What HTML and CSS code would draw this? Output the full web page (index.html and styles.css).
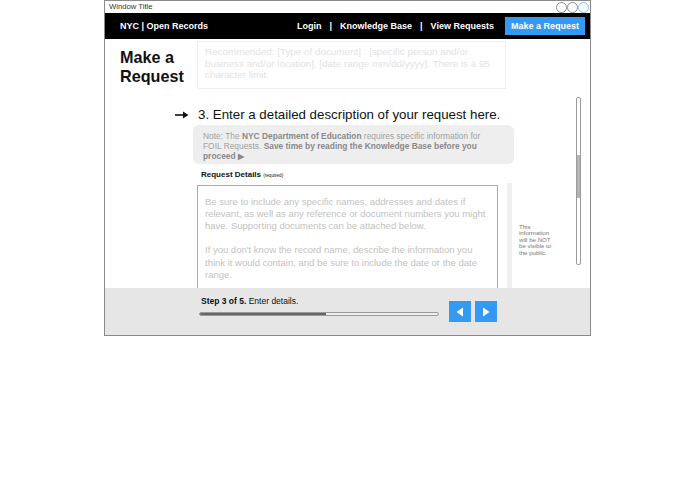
FILE: index.html
```html
<!DOCTYPE html>
<html>
<head>
<meta charset="utf-8">
<link rel="stylesheet" href="styles.css">
</head>
<body>
<div class="window">
  <div class="titlebar">
    <span class="title">Window Title</span>
    <span class="controls"><i class="dot"></i><i class="dot"></i><i class="dot active"></i></span>
  </div>
  <nav class="nav">
    <span class="brand">NYC | Open Records</span>
    <span class="links">
      <a>Login</a><span class="sep">|</span><a>Knowledge Base</a><span class="sep">|</span><a>View Requests</a>
      <a class="cta">Make a Request</a>
    </span>
  </nav>
  <main class="content">
    <div class="intro">
      <h1 class="page-title">Make a Request</h1>
      <div class="summary-box">Recommended: [Type of document] : [specific person and/or business and/or location], [date range mm/dd/yyyy]. There is a 95 character limit.</div>
    </div>
    <h2 class="step-heading">
      <svg class="arrow" width="14" height="8" viewBox="0 0 14 8"><path d="M0 4H10" stroke="#111" stroke-width="1.6"/><path d="M8 0.5L13.5 4L8 7.5Z" fill="#111"/></svg>
      <span>3. Enter a detailed description of your request here.</span>
    </h2>
    <div class="note">Note: The <b>NYC Department of Education</b> requires specific information for FOIL Requests. <b>Save time by reading the Knowledge Base before you proceed &#9654;</b></div>
    <div class="field-label">Request Details <small>(required)</small></div>
    <div class="details">
      <div class="textarea">
        <p>Be sure to include any specific names, addresses and dates if relevant, as well as any reference or document numbers you might have. Supporting documents can be attached below.</p>
        <p>If you don't know the record name, describe the information you think it would contain, and be sure to include the date or the date range.</p>
      </div>
      <div class="strip"></div>
      <div class="side-note">This information will be NOT be visible to the public.</div>
    </div>
    <div class="scrollbar"><div class="thumb"></div></div>
  </main>
  <footer class="footer">
    <div class="progress-wrap">
      <div class="step-text"><b>Step 3 of 5.</b> Enter details.</div>
      <div class="progress"><div class="fill" style="width:53%"></div></div>
    </div>
    <div class="pager">
      <button class="pbtn"><svg width="8" height="10" viewBox="0 0 8 10"><path d="M7 0.5V9.5L0.5 5Z" fill="#fff"/></svg></button>
      <button class="pbtn"><svg width="8" height="10" viewBox="0 0 8 10"><path d="M1 0.5V9.5L7.5 5Z" fill="#fff"/></svg></button>
    </div>
  </footer>
</div>
</body>
</html>
```
FILE: styles.css
```css
* { box-sizing: border-box; }
html, body { margin: 0; padding: 0; background: #fff; }
body { font-family: "Liberation Sans", Arial, Helvetica, sans-serif; color: #111; }

.window {
  margin-left: 104px;
  width: 487px;
  height: 336px;
  border: 1px solid #8a8a8a;
  display: flex;
  flex-direction: column;
  overflow: hidden;
}

.titlebar {
  height: 12px;
  display: flex;
  align-items: center;
  justify-content: space-between;
  padding: 0 1px 0 4px;
}
.title { font-size: 7.7px; color: #333; line-height: 12px; }
.controls { display: flex; height: 11px; margin-top: 1px; }
.dot {
  display: block;
  width: 11px; height: 11px;
  border: 1px solid #8a8a8a;
  border-radius: 50%;
  background: #fff;
}
.dot.active { border-color: #8cc3ea; }

.nav {
  height: 26px;
  background: #000;
  display: flex;
  align-items: center;
  justify-content: space-between;
  padding: 0 5px 0 15px;
  font-size: 9px;
  font-weight: bold;
  color: #fff;
}
.links { display: flex; align-items: center; }
.sep { margin: 0 8px; }
.cta {
  margin-left: 11px;
  background: #3399f3;
  height: 18px;
  line-height: 18px;
  padding: 0 6px;
}

.content {
  position: relative;
  height: 249px;
  overflow: hidden;
}
.intro { display: flex; height: 50px; }
.page-title {
  margin: 8.5px 0 0 15px;
  width: 77px;
  font-size: 16.2px;
  line-height: 19px;
  font-weight: bold;
}
.summary-box {
  margin-top: 2px;
  width: 309px;
  height: 48px;
  border: 1px solid #efefef;
  padding: 4px 7px;
  font-size: 9.85px;
  line-height: 11.5px;
  color: #e2e2e2;
}
.step-heading {
  margin: 18px 0 0 70px;
  height: 16px;
  display: flex;
  align-items: center;
  font-size: 13.3px;
  line-height: 16px;
  font-weight: normal;
  color: #111;
}
.arrow { margin-right: 9px; }
.note {
  margin: 2px 0 0 88px;
  width: 321px;
  height: 39px;
  background: #eeeeee;
  border-radius: 6px;
  padding: 6px 16px 0 10px;
  font-size: 8.4px;
  line-height: 10px;
  color: #a2a2a2;
}
.note b { color: #8a8a8a; }
.field-label {
  margin: 6px 0 0 96px;
  font-size: 8px;
  line-height: 10px;
  font-weight: bold;
}
.field-label small { font-size: 4.6px; font-weight: normal; }
.details { display: flex; margin: 4px 0 0 92px; }
.textarea {
  width: 301px;
  height: 130px;
  border: 1px solid #acacac;
  padding: 9.5px 7px;
  font-size: 9.5px;
  line-height: 12.2px;
  color: #c2c2c2;
}
.textarea p { margin: 0 0 12.2px; }
.strip {
  margin: -2px 0 0 9px;
  width: 5px;
  height: 110px;
  background: #efefef;
}
.side-note {
  margin: 38.5px 0 0 7px;
  width: 34px;
  font-size: 6.1px;
  line-height: 6.5px;
  color: #777;
}
.scrollbar {
  position: absolute;
  left: 471px;
  top: 58px;
  width: 5px;
  height: 168px;
  border: 1px solid #9a9a9a;
  border-radius: 2px;
  background: #fff;
}
.thumb {
  margin-top: 57px;
  height: 43px;
  background: #b5b5b5;
}

.footer {
  height: 47px;
  background: #e6e6e6;
  display: flex;
  padding-left: 94px;
}
.progress-wrap { width: 240px; padding-top: 8px; }
.step-text { margin-left: 2px; font-size: 8.5px; line-height: 11px; color: #111; }
.progress {
  margin-top: 5px;
  height: 4px;
  border: 1px solid #9a9a9a;
  border-radius: 2px;
  background: #eee;
  overflow: hidden;
}
.fill { height: 100%; background: #666; }
.pager { display: flex; margin: 13px 0 0 10px; }
.pbtn {
  width: 22px;
  height: 21px;
  margin-right: 4px;
  border: 0;
  padding: 0;
  background: #3399f3;
  display: flex;
  align-items: center;
  justify-content: center;
}
```
